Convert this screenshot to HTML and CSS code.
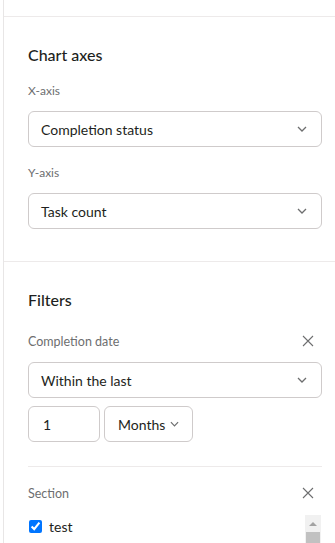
FILE: index.html
```html
<!DOCTYPE html>
<html lang="en">
<head>
    <meta charset="UTF-8">
    <meta name="viewport" content="width=device-width, initial-scale=1.0">
    <title>Chart settings</title>
    <link rel="stylesheet" href="styles.css">
</head>
<body>
    <div class="panel">
        <div class="panel-top"></div>

        <!-- Achsen -->
        <div class="section">
            <h2>Chart axes</h2>

            <div class="field-label">X-axis</div>
            <div class="select">
                <span>Completion status</span>
                <svg class="chevron" width="10" height="6" viewBox="0 0 10 6"><path d="M1 1l4 4 4-4" fill="none" stroke="#6d6e6f" stroke-width="1.3"/></svg>
            </div>

            <div class="field-label">Y-axis</div>
            <div class="select">
                <span>Task count</span>
                <svg class="chevron" width="10" height="6" viewBox="0 0 10 6"><path d="M1 1l4 4 4-4" fill="none" stroke="#6d6e6f" stroke-width="1.3"/></svg>
            </div>
        </div>

        <!-- Filter -->
        <div class="section">
            <h2>Filters</h2>

            <div class="filter">
                <div class="filter-head">
                    <span>Completion date</span>
                    <button class="close">
                        <svg width="12" height="12" viewBox="0 0 12 12"><path d="M1 1l10 10M11 1L1 11" stroke="#6d6e6f" stroke-width="1.1"/></svg>
                    </button>
                </div>
                <div class="select">
                    <span>Within the last</span>
                    <svg class="chevron" width="10" height="6" viewBox="0 0 10 6"><path d="M1 1l4 4 4-4" fill="none" stroke="#6d6e6f" stroke-width="1.3"/></svg>
                </div>
                <div class="range">
                    <input class="number" type="text" value="1">
                    <div class="unit">
                        <span>Months</span>
                        <svg width="9" height="6" viewBox="0 0 10 6"><path d="M1 1l4 4 4-4" fill="none" stroke="#6d6e6f" stroke-width="1.3"/></svg>
                    </div>
                </div>
            </div>

            <div class="filter">
                <div class="filter-head">
                    <span>Section</span>
                    <button class="close">
                        <svg width="12" height="12" viewBox="0 0 12 12"><path d="M1 1l10 10M11 1L1 11" stroke="#6d6e6f" stroke-width="1.1"/></svg>
                    </button>
                </div>
                <div class="option-list">
                    <div class="options">
                        <label><input type="checkbox" checked> test</label>
                    </div>
                    <div class="scrollbar">
                        <div class="scroll-arrow"></div>
                        <div class="scroll-thumb"></div>
                    </div>
                </div>
            </div>
        </div>
    </div>
</body>
</html>
```

FILE: styles.css
```css
html, body {
    height: 100%;
    overflow: hidden;
}

body {
    font-family: "Lato", "Liberation Sans", sans-serif;
    margin: 0;
    background-color: #fff;
    color: #1e1f21;
}

.panel {
    margin-left: 3px;
    border-left: 1px solid #e8e6e6;
    min-height: 100%;
}

.panel-top {
    height: 16px;
    border-bottom: 1px solid #edeaea;
}

.section {
    padding: 26px 13px 32px 24px;
    border-bottom: 1px solid #edeaea;
}

.section h2 {
    margin: 0;
    font-size: 16px;
    font-weight: 500;
    line-height: 24px;
}

.field-label {
    margin-top: 16px;
    font-size: 12px;
    line-height: 16px;
    color: #6d6e6f;
}

.section .select + .field-label {
    margin-top: 18px;
}

.select {
    display: flex;
    align-items: center;
    justify-content: space-between;
    height: 36px;
    margin-top: 12px;
    padding: 0 14px 0 12px;
    border: 1px solid #cfcbcb;
    border-radius: 6px;
    box-sizing: border-box;
    font-size: 14px;
}

.filter {
    padding-bottom: 24px;
}

.filter + .filter {
    border-top: 1px solid #edeaea;
    padding-top: 14px;
}

.filter-head {
    display: flex;
    align-items: center;
    justify-content: space-between;
    height: 24px;
    margin-top: 17px;
    font-size: 12.5px;
    color: #6d6e6f;
}

.filter + .filter .filter-head {
    margin-top: 0;
}

.filter .select {
    margin-top: 9px;
}

.close {
    width: 24px;
    height: 24px;
    margin-right: 2px;
    padding: 0;
    border: none;
    background: none;
    display: flex;
    align-items: center;
    justify-content: center;
}

.range {
    display: flex;
    gap: 4px;
    margin-top: 8px;
}

.number, .unit {
    height: 36px;
    border: 1px solid #cfcbcb;
    border-radius: 6px;
    box-sizing: border-box;
    font-family: inherit;
    font-size: 14px;
    color: #1e1f21;
}

.number {
    width: 72px;
    padding: 0 12px 0 14px;
}

.unit {
    display: flex;
    align-items: center;
    gap: 5px;
    padding: 0 13px;
}

.option-list {
    display: flex;
    height: 120px;
    margin-top: 10px;
    padding-right: 1px;
    font-size: 14px;
}

.options {
    flex: 1;
}

.options label {
    display: flex;
    align-items: center;
    gap: 7px;
    height: 22px;
}

.options input {
    margin: 0 0 0 1px;
}

/* nachgebauter Scrollbalken */
.scrollbar {
    width: 16px;
    background-color: #f1f1f1;
    display: flex;
    flex-direction: column;
    align-items: center;
}

.scroll-arrow {
    width: 0;
    height: 0;
    margin-top: 7px;
    border-left: 4px solid transparent;
    border-right: 4px solid transparent;
    border-bottom: 4px solid #a3a3a3;
}

.scroll-thumb {
    width: 14px;
    height: 60px;
    margin-top: 6px;
    background-color: #c1c1c1;
}
```
